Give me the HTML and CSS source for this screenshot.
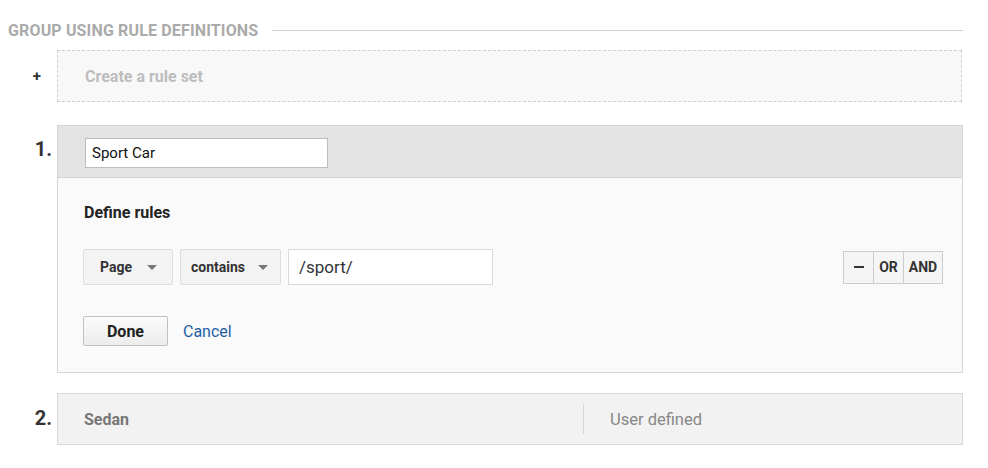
FILE: index.html
```html
<!DOCTYPE html>
<html>
<head>
<meta charset="utf-8">
<link rel="stylesheet" href="styles.css">
</head>
<body>
<div class="page">
  <div class="section-head">
    <span class="section-title">GROUP USING RULE DEFINITIONS</span>
    <span class="section-line"></span>
  </div>

  <div class="row row-create">
    <div class="marker marker-plus">+</div>
    <div class="create-box">Create a rule set</div>
  </div>

  <div class="row row-panel">
    <div class="marker marker-num">1.</div>
    <div class="panel">
      <div class="panel-head">
        <input class="name-input" type="text" value="Sport Car">
      </div>
      <div class="panel-body">
        <div class="define-title">Define rules</div>
        <div class="rule-line">
          <div class="rule-left">
            <div class="dropdown dd-page"><span>Page</span><span class="caret"></span></div>
            <div class="dropdown dd-contains"><span>contains</span><span class="caret"></span></div>
            <input class="value-input" type="text" value="/sport/">
          </div>
          <div class="logic-group">
            <div class="logic-btn logic-minus"><span class="minus-bar"></span></div>
            <div class="logic-btn logic-or">OR</div>
            <div class="logic-btn logic-and">AND</div>
          </div>
        </div>
        <div class="actions">
          <button class="done-btn">Done</button>
          <a class="cancel-link">Cancel</a>
        </div>
      </div>
    </div>
  </div>

  <div class="row row-panel2">
    <div class="marker marker-num">2.</div>
    <div class="panel-collapsed">
      <div class="cell-name">Sedan</div>
      <div class="cell-type">User defined</div>
    </div>
  </div>
</div>
</body>
</html>
```

FILE: styles.css
```css
* { box-sizing: border-box; }
html, body { margin: 0; padding: 0; background: #fff; }
body { font-family: Roboto, "Liberation Sans", Arial, sans-serif; color: #333; }

.page { padding: 20px 25px 0 8px; width: 988px; }

.section-head { display: flex; align-items: center; height: 20px; }
.section-title { font-size: 16px; font-weight: 700; color: #aaaaaa; white-space: nowrap; letter-spacing: 0.15px; }
.section-line { flex: 1; height: 1px; background: #cfcfcf; margin-left: 14px; }

.row { display: flex; align-items: flex-start; }
.marker { width: 49px; flex: 0 0 49px; font-weight: 700; text-align: right; }
.marker-plus { font-size: 15px; color: #333; padding-right: 16px; line-height: 52px; }
.marker-num { font-size: 20px; color: #333; padding-right: 5px; }

.row-create { margin-top: 10px; }
.create-box {
  flex: 1; height: 52px; border: 1px dashed #cfcfcf; background: #f8f8f8;
  display: flex; align-items: center; padding-left: 27px; margin-right: 1px;
  font-size: 16px; font-weight: 700; color: #bdbdbd;
}

.row-panel { margin-top: 23px; }
.row-panel .marker-num { padding-top: 13px; line-height: 22px; }
.panel { flex: 1; border: 1px solid #d6d6d6; background: #fafafa; }
.panel-head { background: #e3e3e3; border-bottom: 1px solid #d3d3d3; height: 52px; padding: 12px 0 0 27px; }
.name-input {
  width: 243px; height: 30px; border: 1px solid #bdbdbd; background: #fff;
  font-family: Roboto, "Liberation Sans", Arial, sans-serif; font-size: 15px; color: #111;
  padding: 0 6px; outline: none; display: block;
}

.panel-body { padding: 25px 19px 26px 25px; }
.define-title { font-size: 16px; font-weight: 700; color: #222; line-height: 20px; padding-left: 1px; }

.rule-line { display: flex; justify-content: space-between; align-items: center; margin-top: 26px; }
.rule-left { display: flex; gap: 7px; }
.dropdown {
  height: 36px; border: 1px solid #dcdcdc; border-radius: 2px; background: #f3f3f3;
  display: flex; align-items: center; justify-content: space-between;
  font-size: 14px; font-weight: 700; color: #333; padding: 0 15px 0 16px;
}
.dd-page { width: 90px; }
.dd-contains { width: 101px; padding-left: 10px; padding-right: 12px; }
.caret { width: 0; height: 0; border-left: 5px solid transparent; border-right: 5px solid transparent; border-top: 5px solid #777; }
.value-input {
  width: 205px; height: 36px; border: 1px solid #d9d9d9; background: #fff;
  font-family: Roboto, "Liberation Sans", Arial, sans-serif; font-size: 17px; color: #333;
  padding: 0 10px; outline: none;
}

.logic-group { display: flex; border: 1px solid #cccccc; height: 33px; }
.logic-btn {
  height: 31px; display: flex; align-items: center; justify-content: center;
  background: #f5f5f5; font-size: 14px; font-weight: 700; color: #333;
}
.logic-minus { width: 29px; }
.logic-or { width: 30px; border-left: 1px solid #cccccc; }
.logic-and { width: 39px; border-left: 1px solid #cccccc; }
.minus-bar { width: 10px; height: 2px; background: #333; display: block; }

.actions { display: flex; align-items: center; margin-top: 31px; }
.done-btn {
  width: 85px; height: 30px; border: 1px solid #c0c0c0; border-radius: 2px;
  background: linear-gradient(#fbfbfb, #ececec);
  font-family: Roboto, "Liberation Sans", Arial, sans-serif; font-size: 16px; font-weight: 700; color: #222;
  padding: 0;
}
.cancel-link { margin-left: 15px; font-size: 16px; color: #1f5fa3; }

.row-panel2 { margin-top: 20px; }
.row-panel2 .marker-num { line-height: 51px; }
.panel-collapsed {
  flex: 1; height: 52px; background: #f2f2f2; border: 1px solid #dadada;
  display: grid; grid-template-columns: 525px 1fr; align-items: center;
}
.cell-name { padding-left: 26px; font-size: 16px; font-weight: 700; color: #777; }
.cell-type { border-left: 1px solid #d8d8d8; height: 30px; display: flex; align-items: center; padding-left: 26px; font-size: 16.5px; color: #888; }
```
